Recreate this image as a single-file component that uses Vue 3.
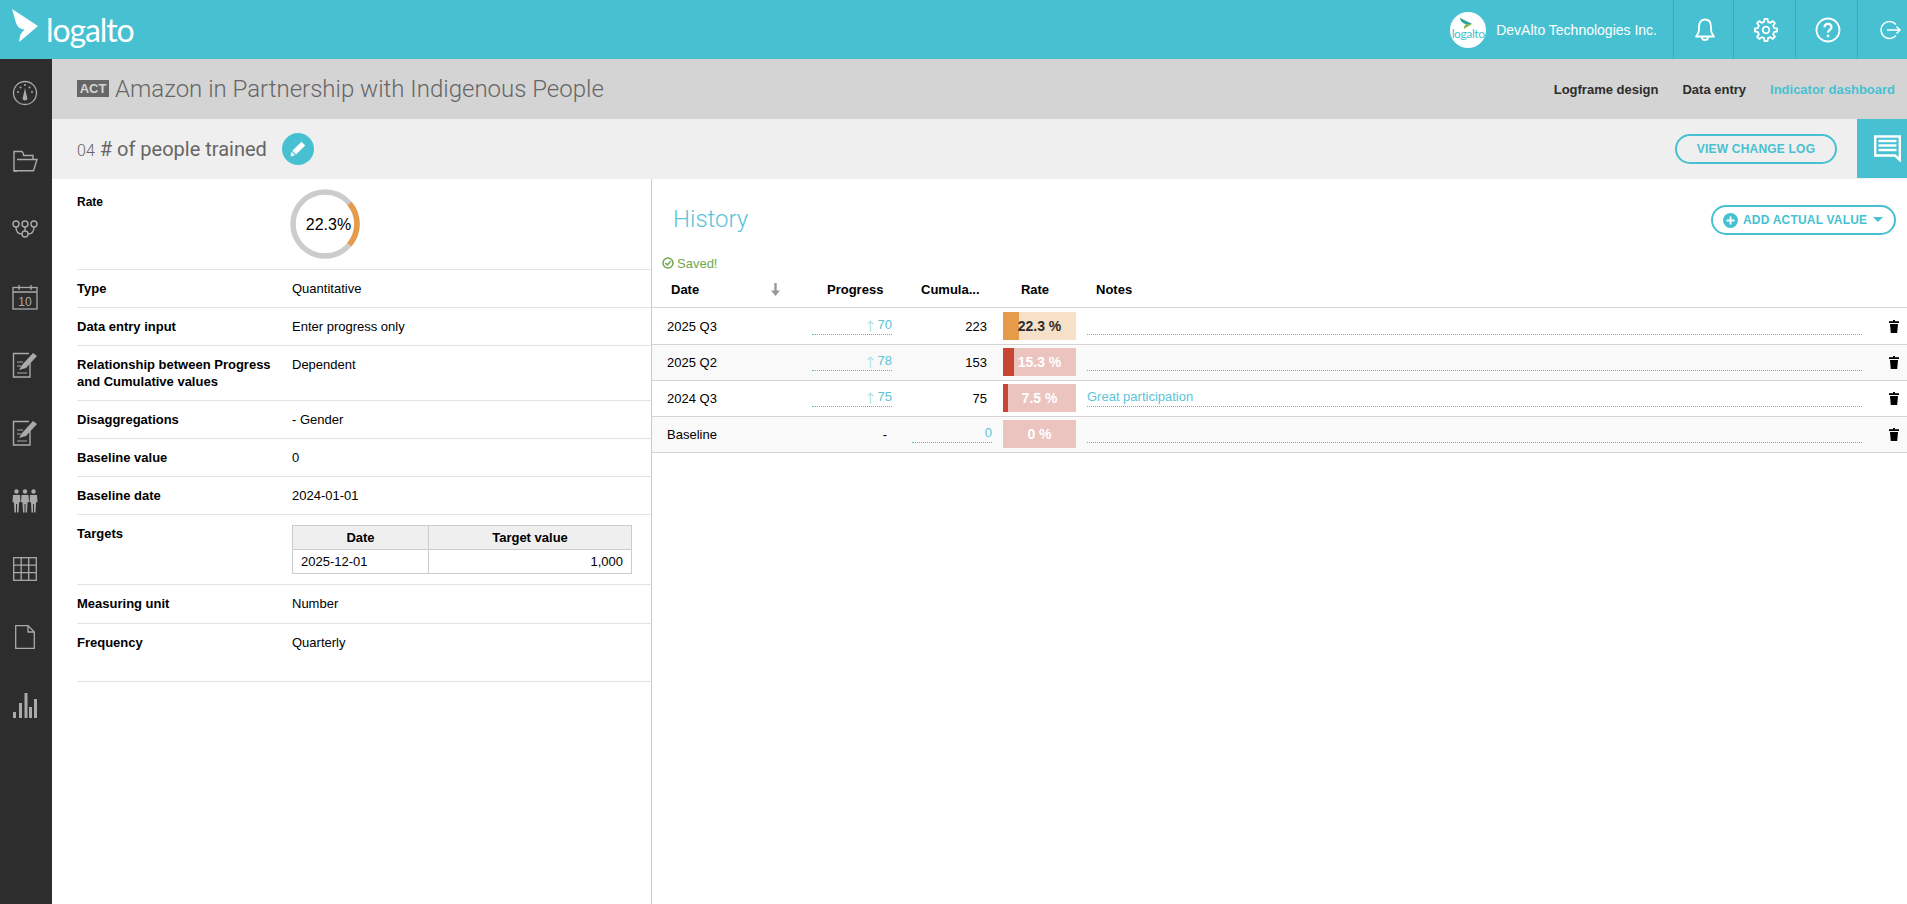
<script setup>
const infoRows = [
  { label: 'Type', value: 'Quantitative' },
  { label: 'Data entry input', value: 'Enter progress only' },
  { label: 'Relationship between Progress and Cumulative values', value: 'Dependent' },
  { label: 'Disaggregations', value: '- Gender' },
  { label: 'Baseline value', value: '0' },
  { label: 'Baseline date', value: '2024-01-01' }
]
const history = [
  { date: '2025 Q3', progress: '70', cumulative: '223', rate: '22.3 %', fill: 22, tone: 'warn', notes: '' },
  { date: '2025 Q2', progress: '78', cumulative: '153', rate: '15.3 %', fill: 15, tone: 'bad', notes: '' },
  { date: '2024 Q3', progress: '75', cumulative: '75', rate: '7.5 %', fill: 7, tone: 'bad', notes: 'Great participation' },
  { date: 'Baseline', progress: null, cumulative: '0', rate: '0 %', fill: 0, tone: 'bad', notes: '', editable: true }
]
const gearPath = (() => {
  const pts = []
  const teeth = 8
  for (let i = 0; i < teeth; i++) {
    const a = (i * 2 * Math.PI) / teeth - Math.PI / 2
    const step = (2 * Math.PI) / teeth
    const seq = [
      [a - step * 0.3, 8.4],
      [a - step * 0.17, 11.2],
      [a + step * 0.17, 11.2],
      [a + step * 0.3, 8.4]
    ]
    for (const [ang, r] of seq) {
      pts.push((12 + r * Math.cos(ang)).toFixed(2) + ' ' + (12 + r * Math.sin(ang)).toFixed(2))
    }
  }
  return 'M' + pts.join(' L') + ' Z'
})()
</script>

<template>
  <div class="page">
    <header class="topbar">
      <div class="brand">
        <svg class="brand-mark" width="30" height="36" viewBox="0 0 30 36">
          <path d="M1 0 L27 17 L8.300 33 Q8 25 13.500 20.500 Q7 20 5 14 Z" fill="#fff" />
        </svg>
        <span class="brand-name">logalto</span>
      </div>
      <div class="account">
        <div class="avatar">
          <svg width="14" height="12" viewBox="0 0 14 12"><path d="M1 0 L13 6 L5 11 Q5 7 7 6 Q2 5 1 0Z" fill="#7fb95a" /><path d="M1 0 L13 6 L7 6 Q2 5 1 0Z" fill="#2f9fa8" /></svg>
          <span>logalto</span>
        </div>
        <span class="org">DevAlto Technologies Inc.</span>
      </div>
      <div class="tool tool-a">
        <svg width="22" height="24" viewBox="0 0 22 24" fill="none" stroke="#fff" stroke-width="1.800" stroke-linejoin="round"><path d="M11 1.500 C6.500 1.500 5 5 5 9 V12 C5 15 3.500 16.500 2 18.500 H20 C18.500 16.500 17 15 17 12 V9 C17 5 15.500 1.500 11 1.500Z" /><path d="M8 19 C8 23 14 23 14 19" /></svg>
      </div>
      <div class="tool tool-b">
        <svg width="24" height="24" viewBox="0 0 24 24" fill="none" stroke="#fff" stroke-width="1.800" stroke-linejoin="round"><path :d="gearPath" /><circle cx="12" cy="12" r="3.300" /></svg>
      </div>
      <div class="tool tool-b">
        <svg width="26" height="26" viewBox="0 0 26 26" fill="none" stroke="#fff" stroke-width="1.800"><circle cx="13" cy="13" r="11.500" /><path d="M9.500 10.200 C9.500 5.800 16.500 5.800 16.500 10 C16.500 13 13 12.800 13 15.800" stroke-width="2.200" /><circle cx="13" cy="19" r="1.400" fill="#fff" stroke="none" /></svg>
      </div>
      <div class="tool tool-c">
        <svg width="22" height="20" viewBox="0 0 22 20" fill="none" stroke="#fff" stroke-width="1.500"><path d="M17 4.500 A8.500 8.500 0 1 0 17 15.500" /><path d="M8 10 H21 M17.500 6.500 L21 10 L17.500 13.500" /></svg>
      </div>
    </header>

    <div class="body">
      <nav class="sidebar">
        <div class="side-item">
          <svg width="26" height="26" viewBox="0 0 26 26" fill="none" stroke="#aaa" stroke-width="1.300"><circle cx="13" cy="13" r="11.500" /><path d="M13 8 L15.500 19 Q13 22 10.500 19 Z" fill="#aaa" stroke="none" /><g fill="#aaa" stroke="none"><circle cx="6" cy="12" r="1" /><circle cx="8.500" cy="7.500" r="1" /><circle cx="13" cy="5" r="1" /><circle cx="17.500" cy="7.500" r="1" /><circle cx="20" cy="12" r="1" /></g></svg>
        </div>
        <div class="side-item">
          <svg width="26" height="22" viewBox="0 0 26 22" fill="none" stroke="#aaa" stroke-width="1.400"><path d="M5 21 H2 V1.500 H10 L11.500 4 V5.500 H21 V9" /><path d="M5 9.500 H25 L21.500 20.800 H2" /></svg>
        </div>
        <div class="side-item">
          <svg width="26" height="18" viewBox="0 0 26 18" fill="none" stroke="#aaa" stroke-width="1.400"><circle cx="4" cy="4" r="3" /><circle cx="13" cy="4" r="3" /><circle cx="22" cy="4" r="3" /><circle cx="13" cy="14" r="3" /><path d="M13 7 V11 M4 7 C4 12 7 14 10 14 M22 7 C22 12 19 14 16 14" /></svg>
        </div>
        <div class="side-item">
          <svg width="26" height="26" viewBox="0 0 26 26" fill="none" stroke="#aaa" stroke-width="1.300"><rect x="1" y="3.500" width="24" height="21.500" /><path d="M1 8 H25 M7 1 V6 M19 1 V6" /><text x="13" y="21.500" text-anchor="middle" class="cal-day">10</text></svg>
        </div>
        <div class="side-item" v-for="n in 2" :key="n">
          <svg width="26" height="26" viewBox="0 0 26 26" fill="none" stroke="#aaa" stroke-width="1.400"><path d="M18 10 V25 H1.500 V1.500 H17" /><path d="M5 10 H11 M5 14 H9 M5 21 H15" stroke-width="1.200" /><path d="M7 18 L10 13 L21 1 L25 4 L14 16 Z" fill="#aaa" stroke="none" /></svg>
        </div>
        <div class="side-item">
          <svg width="26" height="24" viewBox="0 0 26 24" fill="#aaa"><circle cx="4.500" cy="2.500" r="2.200" /><path d="M1 6 H8 L8.500 13 L7 13.500 L6.500 23.500 H5 V15 H4 V23.500 H2.500 L2 13.500 L.5 13Z" /><circle cx="13" cy="2.500" r="2.200" /><path d="M9.500 6 H16.500 L17 13 L15.500 13.500 L15 23.500 H13.500 V15 H12.500 V23.500 H11 L10.500 13.500 L9 13Z" /><circle cx="21.500" cy="2.500" r="2.200" /><path d="M18 6 H25 L25.500 13 L24 13.500 L23.500 23.500 H22 V15 H21 V23.500 H19.500 L19 13.500 L17.500 13Z" /></svg>
        </div>
        <div class="side-item">
          <svg width="24" height="24" viewBox="0 0 24 24" fill="none" stroke="#aaa" stroke-width="1.300"><rect x=".7" y=".7" width="22.600" height="22.600" /><path d="M8.200 .7 V23.300 M15.700 .7 V23.300 M.7 8.200 H23.300 M.7 15.700 H23.300" /></svg>
        </div>
        <div class="side-item">
          <svg width="20" height="24" viewBox="0 0 20 24" fill="none" stroke="#aaa" stroke-width="1.300"><path d="M.7 .7 H13 L19.300 7 V23.300 H.7 Z" /><path d="M13 .7 V7 H19.300" /></svg>
        </div>
        <div class="side-item">
          <svg width="24" height="25" viewBox="0 0 24 25" fill="#aaa"><rect x="0" y="19" width="3" height="6" /><rect x="6" y="10" width="3" height="15" /><rect x="11.500" y="0" width="3" height="25" /><rect x="16" y="14" width="3" height="11" /><rect x="21" y="6" width="3" height="19" /></svg>
        </div>
      </nav>

      <main class="main">
        <section class="project-bar">
          <span class="badge">ACT</span>
          <h1 class="project-title">Amazon in Partnership with Indigenous People</h1>
          <nav class="tabs">
            <a>Logframe design</a>
            <a>Data entry</a>
            <a class="active">Indicator dashboard</a>
          </nav>
        </section>

        <section class="indicator-bar">
          <span class="ind-num">04</span>
          <h2 class="ind-title"># of people trained</h2>
          <span class="pen">
            <svg width="16" height="16" viewBox="0 0 16 16" fill="#fff"><path d="M11.500 .8 L15.200 4.500 L6 13.500 L2.300 9.800 Z" /><path d="M1.500 10.800 L5 14.300 L.5 15.500 Z" /></svg>
          </span>
          <button class="pill log-btn">VIEW CHANGE LOG</button>
          <div class="chat">
            <svg width="27" height="27" viewBox="0 0 27 27" fill="none" stroke="#fff"><path d="M1.200 1.500 H25.800 V25 L21 20.500 H1.200 Z" stroke-width="2.400" /><path d="M4.500 6 H22.500 M4.500 10.500 H22.500 M4.500 15 H22.500" stroke-width="2.500" /></svg>
          </div>
        </section>

        <div class="content">
          <aside class="details">
            <div class="row rate-row">
              <div class="label rate-label">Rate</div>
              <div class="ring-wrap">
                <svg width="70" height="70" viewBox="0 0 70 70">
                  <circle cx="35" cy="35" r="32" fill="none" stroke="#cccccc" stroke-width="5.500" />
                  <circle cx="35" cy="35" r="32" fill="none" stroke="#e69b4a" stroke-width="5.500" pathLength="100" stroke-dasharray="22.3 77.7" transform="rotate(-40 35 35)" />
                  <text x="38.500" y="41" text-anchor="middle" class="ring-text">22.3%</text>
                </svg>
              </div>
            </div>
            <div class="row" v-for="r in infoRows" :key="r.label">
              <div class="label">{{ r.label }}</div>
              <div class="value">{{ r.value }}</div>
            </div>
            <div class="row targets-row">
              <div class="label">Targets</div>
              <table class="targets">
                <thead>
                  <tr><th class="t-date">Date</th><th>Target value</th></tr>
                </thead>
                <tbody>
                  <tr><td>2025-12-01</td><td class="num">1,000</td></tr>
                </tbody>
              </table>
            </div>
            <div class="row unit-row">
              <div class="label">Measuring unit</div>
              <div class="value">Number</div>
            </div>
            <div class="row freq-row">
              <div class="label">Frequency</div>
              <div class="value">Quarterly</div>
            </div>
          </aside>

          <section class="history">
            <div class="history-head">
              <h3>History</h3>
              <button class="pill add-btn">
                <span class="plus"><svg width="15" height="15" viewBox="0 0 15 15"><circle cx="7.500" cy="7.500" r="7.500" fill="#47c1d2" /><path d="M7.500 3.500 V11.500 M3.500 7.500 H11.500" stroke="#fff" stroke-width="1.800" /></svg></span>
                <span>ADD ACTUAL VALUE</span>
                <span class="caret"></span>
              </button>
            </div>
            <div class="saved">
              <svg width="12" height="12" viewBox="0 0 12 12" fill="none" stroke="#6fa84d" stroke-width="1.500"><circle cx="6" cy="6" r="5" /><path d="M3.300 6 L5.300 8 L8.700 4.200" /></svg>
              <span>Saved!</span>
            </div>
            <div class="grid head">
              <div class="h-date"><span>Date</span>
                <svg width="9" height="13" viewBox="0 0 9 13" fill="#999"><path d="M3.300 0 H5.700 V7.500 H9 L4.500 13 L0 7.500 H3.300 Z" /></svg>
              </div>
              <div class="h-prog">Progress</div>
              <div class="h-cum">Cumula...</div>
              <div class="h-rate">Rate</div>
              <div class="h-notes">Notes</div>
              <div></div>
            </div>
            <div class="grid data" v-for="h in history" :key="h.date">
              <div class="c-date">{{ h.date }}</div>
              <div class="c-prog">
                <div v-if="h.progress" class="field">
                  <svg class="up" width="7" height="12" viewBox="0 0 7 12" fill="none" stroke="#b7e3ea"><path d="M3.500 1 V12" stroke-width="1.300" /><path d="M.7 4 L3.500 1 L6.300 4" stroke-width="1.100" /></svg>{{ h.progress }}
                </div>
                <div v-else class="dash">-</div>
              </div>
              <div class="c-cum">
                <div v-if="h.editable" class="field">{{ h.cumulative }}</div>
                <span v-else>{{ h.cumulative }}</span>
              </div>
              <div class="c-rate" :class="h.tone">
                <div class="fill" :style="{ width: h.fill + '%' }"></div>
                <span>{{ h.rate }}</span>
              </div>
              <div class="c-notes"><div class="field note">{{ h.notes }}</div></div>
              <div class="c-trash">
                <svg width="10" height="13" viewBox="0 0 10 13" fill="#000"><rect x="4" y="0" width="2" height="1.500" /><rect x="0" y="1.200" width="10" height="1.800" /><path d="M1 4 H9 L8.200 13 H1.800 Z" /></svg>
              </div>
            </div>
          </section>
        </div>
      </main>
    </div>
  </div>
</template>

<style>
html, body { margin: 0; padding: 0; background: #fff; }
</style>

<style scoped>
.page { width: 1907px; height: 904px; overflow: hidden; display: flex; flex-direction: column; font-family: "Liberation Sans", Arial, sans-serif; font-size: 13px; color: #000; }
.topbar { height: 59px; flex: none; background: #47c1d2; display: flex; align-items: stretch; }
.brand { display: flex; align-items: flex-start; padding-left: 11px; }
.brand-mark { margin-top: 9px; flex: none; }
.brand-name { font-family: Lato, sans-serif; font-weight: 400; font-size: 32px; line-height: 40px; margin: 10px 0 0 5px; color: #fff; letter-spacing: -1.100px; }
.account { margin-left: auto; display: flex; align-items: center; padding-right: 16px; }
.avatar { width: 36px; height: 36px; border-radius: 50%; background: #fff; display: flex; flex-direction: column; align-items: center; justify-content: center; color: #47c1d2; font-family: Lato, sans-serif; font-size: 12px; line-height: 11px; letter-spacing: -.4px; margin-right: 10px; overflow: hidden; box-sizing: border-box; padding-bottom: 2px; }
.avatar svg { margin-bottom: -2px; margin-right: 4px; }
.org { color: #fff; font-size: 14px; }
.tool { display: flex; align-items: center; justify-content: center; border-left: 1px solid #3ba9ba; box-sizing: border-box; padding-left: 2px; }
.tool-a { width: 60px; }
.tool-b { width: 62px; }
.tool-c { width: 50px; justify-content: flex-start; padding-left: 21px; }

.body { flex: 1; display: flex; min-height: 0; }
.sidebar { width: 52px; flex: none; background: #2d2d2d; }
.side-item { height: 68px; display: flex; align-items: center; justify-content: center; padding-right: 3px; box-sizing: border-box; }
.cal-day { font: 12px "Liberation Sans", Arial, sans-serif; fill: #aaa; stroke: none; }

.main { flex: 1; min-width: 0; display: flex; flex-direction: column; }
.project-bar { height: 60px; flex: none; background: #d4d4d4; display: flex; align-items: center; padding-left: 25px; padding-right: 12px; }
.badge { background: #666; color: #d4d4d4; font-weight: 700; font-size: 13px; line-height: 17px; width: 32px; text-align: center; margin-top: -1px; }
.project-title { font-family: Roboto, sans-serif; font-weight: 300; font-size: 24px; color: #666; margin: 0 0 0 6px; }
.tabs { margin-left: auto; display: flex; gap: 24px; font-weight: 700; font-size: 13px; color: #2d2d2d; }
.tabs .active { color: #47c1d2; }

.indicator-bar { height: 60px; flex: none; background: #efefef; display: flex; align-items: center; padding-left: 25px; }
.ind-num { font-family: Roboto, sans-serif; font-weight: 300; font-size: 16px; color: #666; margin-top: 2px; }
.ind-title { font-family: Roboto, sans-serif; font-weight: 400; font-size: 20px; color: #666; margin: 0 0 0 5px; }
.pen { width: 32px; height: 32px; border-radius: 50%; background: #47c1d2; display: flex; align-items: center; justify-content: center; margin-left: 15px; }
.pill { background: #fff; border: 2px solid #47c1d2; border-radius: 16px; color: #47c1d2; font: 700 12px "Liberation Sans", Arial, sans-serif; letter-spacing: .2px; height: 30px; box-sizing: border-box; padding: 0; display: flex; align-items: center; justify-content: center; }
.log-btn { margin-left: auto; width: 162px; background: transparent; margin-right: 20px; }
.chat { width: 50px; height: 59px; align-self: flex-start; background: #47c1d2; display: flex; align-items: center; justify-content: center; padding-left: 10px; box-sizing: border-box; }

.content { flex: 1; display: flex; min-height: 0; }
.details { width: 600px; flex: none; box-sizing: border-box; padding-left: 25px; border-right: 1px solid #ccc; }
.row { display: grid; grid-template-columns: 215px 1fr; border-bottom: 1px solid #e3e3e3; padding: 10px 0; line-height: 17px; }
.label { font-weight: 700; padding-right: 10px; font-size: 13px; }
.value { font-size: 13px; }
.rate-label { font-size: 12px; line-height: 14px; padding-top: 6px; }
.ring-wrap { height: 70px; margin-left: -2px; }
.ring-text { font: 16px "Liberation Sans", Arial, sans-serif; fill: #000; }
.targets-row { padding-bottom: 10px; }
.targets { border-collapse: collapse; width: 340px; font-size: 13px; table-layout: fixed; }
.targets th, .targets td { border: 1px solid #ccc; height: 24px; padding: 0 8px; box-sizing: border-box; line-height: 15px; }
.targets th { background: #efefef; font-weight: 700; text-align: center; }
.t-date { width: 136px; }
.num { text-align: right; }
.unit-row { padding-bottom: 11px; }
.freq-row { padding-bottom: 30px; }

.history { flex: 1; min-width: 0; }
.history-head { display: flex; align-items: flex-start; justify-content: space-between; padding: 26px 11px 0 21px; height: 77px; box-sizing: border-box; }
.history-head h3 { font-family: Roboto, sans-serif; font-weight: 300; font-size: 24px; line-height: 28px; color: #5cc4d8; margin: 0; }
.add-btn { width: 185px; justify-content: flex-start; padding-left: 10px; }
.plus { display: flex; margin-right: 5px; }
.caret { width: 0; height: 0; border-left: 5px solid transparent; border-right: 5px solid transparent; border-top: 5px solid #47c1d2; margin-left: 6px; margin-top: -2px; }
.saved { display: flex; align-items: center; gap: 3px; height: 14px; padding-left: 10px; color: #6fa84d; font-size: 13px; }
.grid { display: grid; grid-template-columns: 150px 100px 100px 80px 1fr 40px; align-items: center; border-bottom: 1px solid #d4d4d4; }
.head { height: 38px; box-sizing: border-box; padding-top: 1px; font-weight: 700; }
.h-date { display: flex; justify-content: space-between; padding: 0 22px 0 19px; align-items: center; }
.h-prog { padding-left: 25px; }
.h-cum { padding-left: 19px; }
.h-rate { text-align: center; padding-right: 14px; }
.h-notes { padding-left: 14px; }
.data { height: 36px; box-sizing: border-box; padding-bottom: 1px; }
.head + .data { height: 37px; padding-top: 1px; }
.data:nth-of-type(odd) { background: #f9f9f9; }
.c-date { padding-left: 15px; }
.field { border-bottom: 1px dotted #47c1d2; color: #5cc4d8; text-align: right; height: 20px; margin-bottom: 2px; padding-top: 1px; line-height: 17px; box-sizing: border-box; }
.up { margin-right: 4px; vertical-align: -3px; }
.c-prog { padding: 0 10px; box-sizing: border-box; }
.dash { text-align: right; padding-right: 5px; }
.c-cum { padding: 0 10px; text-align: right; }
.c-cum > span { padding-right: 5px; }
.c-rate { position: relative; height: 28px; width: 73px; margin-left: 1px; display: flex; align-items: center; justify-content: center; font-weight: 700; font-size: 14px; }
.c-rate span { position: relative; }
.fill { position: absolute; left: 0; top: 0; bottom: 0; }
.warn { background: #f6e1c8; color: #2d2d2d; }
.warn .fill { background: #e69b4a; }
.bad { background: #ecc4bf; color: #fff; }
.bad .fill { background: #c64632; }
.c-notes { padding: 0 5px; }
.note { text-align: left; font-size: 13px; }
.c-trash { display: flex; justify-content: flex-end; padding-right: 8px; }
</style>
